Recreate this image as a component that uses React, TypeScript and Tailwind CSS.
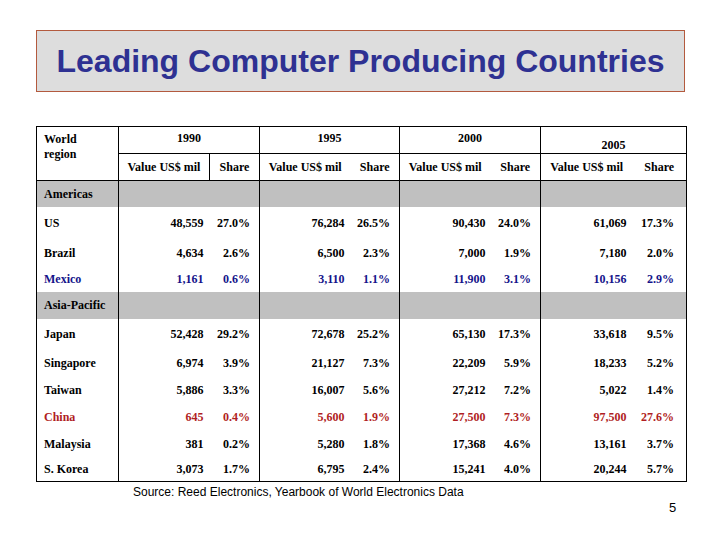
import React from "react";

type Row = {
  name: string;
  values: string[];
  tone?: "blue" | "red";
  h: string;
};

const americas: Row[] = [
  { name: "US", values: ["48,559", "27.0%", "76,284", "26.5%", "90,430", "24.0%", "61,069", "17.3%"], h: "h-[32px]" },
  { name: "Brazil", values: ["4,634", "2.6%", "6,500", "2.3%", "7,000", "1.9%", "7,180", "2.0%"], h: "h-[28px]" },
  { name: "Mexico", values: ["1,161", "0.6%", "3,110", "1.1%", "11,900", "3.1%", "10,156", "2.9%"], tone: "blue", h: "h-[25px]" },
];

const asia: Row[] = [
  { name: "Japan", values: ["52,428", "29.2%", "72,678", "25.2%", "65,130", "17.3%", "33,618", "9.5%"], h: "h-[31px]" },
  { name: "Singapore", values: ["6,974", "3.9%", "21,127", "7.3%", "22,209", "5.9%", "18,233", "5.2%"], h: "h-[27px]" },
  { name: "Taiwan", values: ["5,886", "3.3%", "16,007", "5.6%", "27,212", "7.2%", "5,022", "1.4%"], h: "h-[27px]" },
  { name: "China", values: ["645", "0.4%", "5,600", "1.9%", "27,500", "7.3%", "97,500", "27.6%"], tone: "red", h: "h-[27px]" },
  { name: "Malaysia", values: ["381", "0.2%", "5,280", "1.8%", "17,368", "4.6%", "13,161", "3.7%"], h: "h-[27px]" },
  { name: "S. Korea", values: ["3,073", "1.7%", "6,795", "2.4%", "15,241", "4.0%", "20,244", "5.7%"], h: "h-[24px]" },
];

// value cells close a year group on the right only every second column
const cellBorder = ["", "border-r border-black", "", "border-r border-black", "", "border-r border-black", "", ""];
const cellPad = ["pr-[6px]", "pr-[9px]", "pr-[6px]", "pr-[9px]", "pr-[5px]", "pr-[9px]", "pr-[6px]", "pr-[12px]"];

const toneClass = (tone?: string) =>
  tone === "blue" ? "text-[#14148a]" : tone === "red" ? "text-[#b01e23]" : "text-black";

const GroupRow = ({ label, h }: { label: string; h: string }) => (
  <tr className={`${h} bg-[#c0c0c0]`}>
    <td className="border-r border-black pl-[7px] align-middle">{label}</td>
    <td colSpan={2} className="border-r border-black" />
    <td colSpan={2} className="border-r border-black" />
    <td colSpan={2} className="border-r border-black" />
    <td colSpan={2} />
  </tr>
);

const DataRow = ({ row }: { row: Row }) => (
  <tr className={`${row.h} ${toneClass(row.tone)}`}>
    <td className="border-r border-black pl-[7px] align-middle">{row.name}</td>
    {row.values.map((v, i) => (
      <td key={i} className={`text-right align-middle ${cellPad[i]} ${cellBorder[i]}`}>
        {v}
      </td>
    ))}
  </tr>
);

export default function App() {
  return (
    <div className="w-[720px] h-[540px] bg-white relative overflow-hidden">
      {/* Title */}
      <div className="ml-[36px] mt-[30px] w-[649px] h-[62px] bg-[#dddddd] border border-[#b35a3e] flex items-center justify-center">
        <h1 className="text-[32px] font-bold text-[#2e3192] font-['Liberation_Sans',Arial,sans-serif] leading-none">
          Leading Computer Producing Countries
        </h1>
      </div>

      {/* Table */}
      <table className="ml-[36px] mt-[34px] w-[650px] border-collapse border border-black table-fixed font-['Liberation_Serif','Times_New_Roman',serif] text-[12px] font-bold text-black leading-none">
        <colgroup>
          <col className="w-[82px]" />
          <col className="w-[91px]" />
          <col className="w-[50px]" />
          <col className="w-[91px]" />
          <col className="w-[49px]" />
          <col className="w-[91px]" />
          <col className="w-[50px]" />
          <col className="w-[92px]" />
          <col className="w-[54px]" />
        </colgroup>
        <thead>
          <tr className="h-[27px]">
            <th rowSpan={2} className="border-r border-black text-left align-top pl-[7px] pt-[5px] font-bold leading-[15px]">
              World
              <br />
              region
            </th>
            <th colSpan={2} className="border-r border-b border-black align-top pt-[5px] font-bold">1990</th>
            <th colSpan={2} className="border-r border-b border-black align-top pt-[5px] font-bold">1995</th>
            <th colSpan={2} className="border-r border-b border-black align-top pt-[5px] font-bold">2000</th>
            <th colSpan={2} className="border-b border-black align-top pt-[12px] font-bold">2005</th>
          </tr>
          <tr className="h-[27px] border-b border-black">
            <th className="border-r border-black font-bold">Value US$ mil</th>
            <th className="border-r border-black font-bold">Share</th>
            <th className="font-bold">Value US$ mil</th>
            <th className="border-r border-black font-bold">Share</th>
            <th className="font-bold">Value US$ mil</th>
            <th className="border-r border-black font-bold">Share</th>
            <th className="font-bold">Value US$ mil</th>
            <th className="font-bold">Share</th>
          </tr>
        </thead>
        <tbody>
          <GroupRow label="Americas" h="h-[26px]" />
          {americas.map((r) => (
            <DataRow key={r.name} row={r} />
          ))}
          <GroupRow label="Asia-Pacific" h="h-[27px]" />
          {asia.map((r) => (
            <DataRow key={r.name} row={r} />
          ))}
        </tbody>
      </table>

      <p className="ml-[133px] mt-[3px] text-[12px] leading-[14px] text-black font-['Liberation_Sans',Arial,sans-serif]">
        Source: Reed Electronics, Yearbook of World Electronics Data
      </p>
      <p className="ml-[669px] mt-[1px] text-[13px] leading-[16px] text-black font-['Liberation_Sans',Arial,sans-serif]">
        5
      </p>
    </div>
  );
}
